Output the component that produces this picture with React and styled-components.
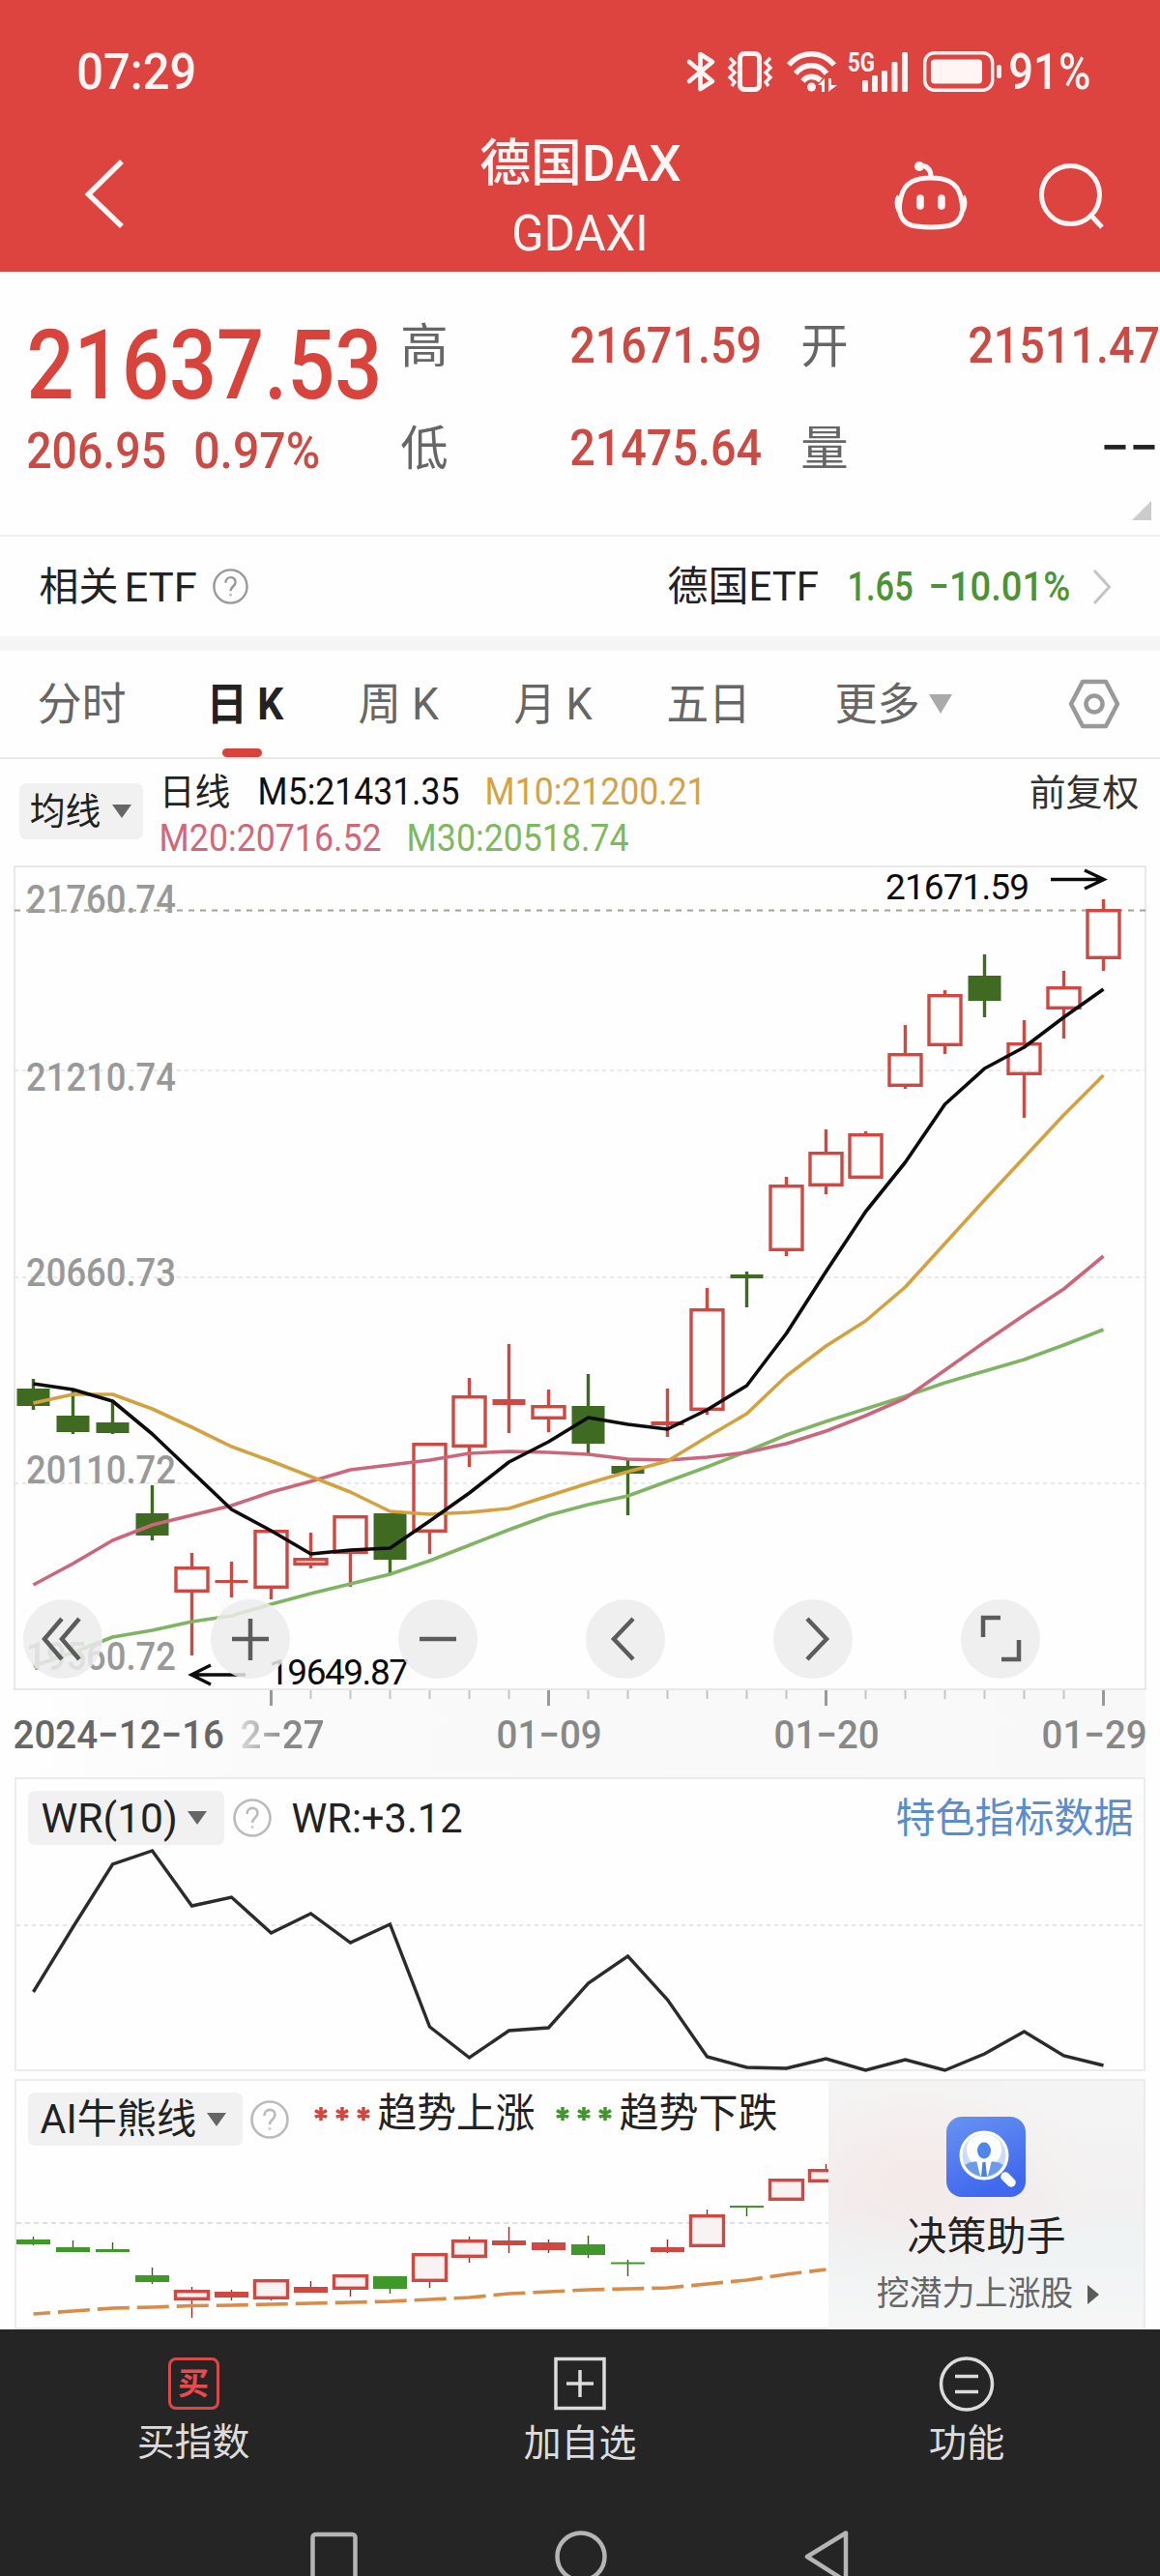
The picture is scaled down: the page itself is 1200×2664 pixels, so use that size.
import { useLayoutEffect, useRef, useState } from 'react';
import styled, { createGlobalStyle } from 'styled-components';

const GlobalStyle = createGlobalStyle`
  * {
    box-sizing: border-box;
    margin: 0;
    padding: 0;
  }

  body {
    width: 1200px;
    overflow-x: hidden;
    background: #fefefe;
    color: #222;
    font-family: Roboto, 'Noto Sans CJK SC', sans-serif;
  }

  svg {
    display: block;
    flex: none;
    overflow: visible;
  }
`;

const RED = '#cf4842';
const GREEN = '#3f6a22';
const AI_GREEN = '#40982b';

/* ---------- fitted text ---------- */

const TextBox = styled.div`
  flex: none;
  width: ${(p) => p.$width}px;
  margin-left: ${(p) => p.$before || 0}px;
  height: ${(p) => p.$line || p.$size}px;
  line-height: ${(p) => p.$line || p.$size}px;
  font-size: ${(p) => p.$size}px;
  font-weight: ${(p) => p.$weight || 400};
  color: ${(p) => p.$color || 'inherit'};
  white-space: nowrap;
`;

const TextRun = styled.span`
  display: inline-block;
  transform-origin: 0 50%;
`;

// Squeezes a run of text horizontally so that it fills exactly `width` pixels
function Fit({ children, width, size, line, weight, color, before }) {
  const ref = useRef(null);
  const [scale, setScale] = useState(1);

  useLayoutEffect(() => {
    setScale((width + size * 0.07) / ref.current.offsetWidth);
  }, [width, size, children]);

  return (
    <TextBox
      $width={width}
      $size={size}
      $line={line}
      $weight={weight}
      $color={color}
      $before={before}
    >
      <TextRun
        ref={ref}
        style={{ transform: `translateX(${-size * 0.035}px) scaleX(${scale})` }}
      >
        {children}
      </TextRun>
    </TextBox>
  );
}

/* ---------- header ---------- */

const Header = styled.header`
  height: 281px;
  background: #dd4440;
  color: #fff5f5;
`;

const StatusBar = styled.div`
  display: flex;
  align-items: center;
  justify-content: space-between;
  height: 130px;
  padding: 18px 73px 0 81px;
`;

const StatusIcons = styled.div`
  display: flex;
  align-items: center;
`;

const StatusIcon = styled.svg.attrs({ fill: 'none', stroke: 'currentColor' })`
  margin-right: ${(p) => p.$after}px;
`;

const NavBar = styled.div`
  display: grid;
  grid-template-columns: 1fr 205px 1fr;
  height: 151px;
  padding: 4px 58px 0;
`;

const NavTitle = styled.div`
  display: flex;
  flex-direction: column;
  align-items: center;
`;

const NavActions = styled.div`
  display: flex;
  justify-content: flex-end;
  gap: 74px;
  padding-top: 31px;
`;

const BackSlot = styled.div`
  padding: 31px 0 0 29px;
`;

function TopBar() {
  return (
    <Header>
      <StatusBar>
        <Fit width={120} size={51} weight={500}>07:29</Fit>
        <StatusIcons>
          <StatusIcon $after={14} width="28" height="42" strokeWidth="4.6" strokeLinejoin="round" strokeLinecap="round">
            <path d="M2 11 26 31 13.5 39V3L26 11 2 31" />
          </StatusIcon>
          <StatusIcon $after={15} width="46" height="42" strokeWidth="5">
            <rect x="12.5" y="2.5" width="20" height="37" rx="4.5" />
            <path strokeWidth="3.4" d="M2 7l5 5-5 5 5 5-5 5 5 5-3 4M44 7l-5 5 5 5-5 5 5 5-5 5 3 4" />
          </StatusIcon>
          <StatusIcon $after={11} width="52" height="42" strokeWidth="5.6">
            <path d="M2 14C15-1 36-1 49 14M9 23C18 12 33 12 41 23M16.500 31C21 25 29 25 35 30" />
            <circle cx="25.500" cy="37" r="4.500" fill="currentColor" stroke="none" />
            <path fill="currentColor" stroke="none" d="M32 35l7-7v14h-3v-7zM43 42V28h3v7h6z" />
          </StatusIcon>
          <StatusIcon $after={16} width="62" height="42">
            <g fill="currentColor" stroke="none">
              <text x="0" y="20.500" fontSize="27" fontWeight="700" textLength="28" lengthAdjust="spacingAndGlyphs">5G</text>
              <rect x="15" y="30" width="6" height="12" rx="1.500" />
              <rect x="25" y="25" width="6" height="17" rx="1.500" />
              <rect x="35" y="20" width="6" height="22" rx="1.500" />
              <rect x="45.500" y="11" width="6" height="31" rx="1.500" />
              <rect x="56" y="1" width="6" height="41" rx="1.500" />
            </g>
          </StatusIcon>
          <StatusIcon $after={9} width="81" height="42" strokeWidth="3.4">
            <rect x="1.700" y="1.700" width="70" height="38.500" rx="10" />
            <rect x="8" y="8.500" width="53" height="25" rx="4" fill="currentColor" stroke="none" />
            <rect x="76" y="14" width="5" height="14" rx="2.500" fill="currentColor" stroke="none" />
          </StatusIcon>
          <Fit width={82} size={51} weight={500}>91%</Fit>
        </StatusIcons>
      </StatusBar>
      <NavBar>
        <BackSlot>
          <svg width="42" height="72" fill="none" stroke="currentColor" strokeWidth="5.500">
            <path d="M39 2 4.500 36 39 69" />
          </svg>
        </BackSlot>
        <NavTitle>
          <Fit width={205} size={52} line={72} weight={500}>德国DAX</Fit>
          <Fit width={138} size={51} line={72}>GDAXI</Fit>
        </NavTitle>
        <NavActions>
          <svg width="76" height="72" viewBox="925 164 76 72" fill="none" stroke="currentColor" strokeWidth="5">
            <path d="M963 183c14 0 27 3 31 20 6 22-6 29-16 30q-15 2-30 0c-10-1-22-8-16-30 4-17 17-20 31-20zM963 182c0-8-4-12-12-12" />
            <circle cx="951" cy="171" r="5" fill="currentColor" stroke="none" />
            <path strokeWidth="5" d="M930 202q-4 6 0 15M996 202q4 6 0 15" />
            <path strokeWidth="7.500" strokeLinecap="round" d="M952 204v8M974 204v8" />
          </svg>
          <svg width="67" height="72" viewBox="1075 164 67 72" fill="none" stroke="currentColor" strokeWidth="5">
            <circle cx="1107.500" cy="200.500" r="30" />
            <path d="m1128 221 12 13" />
          </svg>
        </NavActions>
      </NavBar>
    </Header>
  );
}

/* ---------- quote ---------- */

const Quote = styled.section`
  position: relative;
  display: flex;
  height: 274px;
  padding: 23px 0 0 31px;
  border-bottom: 2px solid #efefef;
`;

const PriceColumn = styled.div`
  width: 385px;
  padding-top: 19px;
`;

const ChangeRow = styled.div`
  display: flex;
  margin-left: -2px;
`;

const StatGrid = styled.div`
  display: grid;
  grid-template-columns: 175px 239px 173px 195px;
  grid-auto-rows: 106px;
`;

const CornerMark = styled.i`
  position: absolute;
  right: 9px;
  bottom: 15px;
  border-style: solid;
  border-width: 0 0 20px 20px;
  border-color: transparent transparent #ccc transparent;
`;

const STATS = [
  ['高', '21671.59'],
  ['开', '21511.47'],
  ['低', '21475.64'],
  ['量', '−−'],
];

function QuoteBoard() {
  return (
    <Quote>
      <PriceColumn>
        <Fit width={361} size={101} line={110} weight={500} color="#d8433c">21637.53</Fit>
        <ChangeRow>
          <Fit width={141} size={52} line={68} color="#cb4a43" weight={500}>206.95</Fit>
          <Fit width={127} size={52} line={68} color="#cb4a43" weight={500} before={32}>0.97%</Fit>
        </ChangeRow>
      </PriceColumn>
      <StatGrid>
        {STATS.map(([label, value]) => [
          <Fit key={label} width={46} size={49} line={109} color="#666">{label}</Fit>,
          value === '−−' ? (
            <Fit key={value} width={56} size={50} line={106} color="#222" weight={500} before={137}>{value}</Fit>
          ) : (
            <Fit key={value} width={195} size={52} line={107} color="#cb4a43" weight={500}>{value}</Fit>
          ),
        ])}
      </StatGrid>
      <CornerMark />
    </Quote>
  );
}

/* ---------- related ETF ---------- */

const EtfRow = styled.section`
  display: flex;
  align-items: center;
  height: 118px;
  padding: 0 50px 0 42px;
  border-bottom: 15px solid #f5f5f5;
`;

const Spacer = styled.div`
  flex: 1;
`;

const MoreArrow = styled.svg`
  margin-left: 24px;
`;

const HelpIcon = styled.svg.attrs({ viewBox: '0 0 40 40', fill: 'none', stroke: 'currentColor' })`
  width: ${(p) => p.$size}px;
  height: ${(p) => p.$size}px;
  margin-left: ${(p) => p.$before}px;
  color: ${(p) => p.$color || '#bbb'};
`;

function Help({ size, before, color }) {
  return (
    <HelpIcon $size={size} $before={before} $color={color}>
      <circle cx="20" cy="20" r="18.500" strokeWidth="2.600" />
      <path strokeWidth="2.600" d="M14.500 16c0-8 11-8 11-1 0 5-5.500 5-5.500 10" />
      <circle cx="20" cy="29.500" r="1" />
    </HelpIcon>
  );
}

function RelatedEtf() {
  return (
    <EtfRow>
      <Fit width={79} size={41} line={60}>相关</Fit>
      <Fit width={72} size={43} line={60} before={9}>ETF</Fit>
      <Help size={37} before={18} color="#999" />
      <Spacer />
      <Fit width={154} size={42} line={60}>德国ETF</Fit>
      <Fit width={65} size={42} line={64} color="#4c9336" weight={500} before={32}>1.65</Fit>
      <Fit width={144} size={42} line={64} color="#4c9336" weight={500} before={19}>−10.01%</Fit>
      <MoreArrow width="20" height="38" fill="none" stroke="#c4c4c4" strokeWidth="3">
        <path d="m2 2 15.500 17L2 36" />
      </MoreArrow>
    </EtfRow>
  );
}

/* ---------- period tabs ---------- */

const Tabs = styled.nav`
  display: flex;
  height: 112px;
  padding-left: 40px;
  border-bottom: 2px solid #e8e8e8;
`;

const Tab = styled.div`
  display: flex;
  flex-direction: column;
  align-items: center;
  justify-content: space-between;
  width: ${(p) => p.$width}px;
  margin-left: ${(p) => p.$before}px;
  color: ${(p) => (p.$active ? '#222' : '#666')};
`;

const TabMark = styled.i`
  width: 41px;
  height: 10px;
  margin: -10px 7px 0 0;
  border-radius: 5px;
  background: #d8433c;
`;

const Caret = styled.i`
  flex: none;
  align-self: center;
  margin-left: ${(p) => p.$before}px;
  border-style: solid;
  border-width: ${(p) => p.$height}px ${(p) => p.$width / 2}px 0;
  border-color: ${(p) => p.$color || '#666'} transparent transparent;
`;

const SettingsSlot = styled.div`
  margin-left: 120px;
  padding-top: 29px;
`;

const TABS = [
  { label: '分时', width: 89, before: 0 },
  { label: '日 K', width: 77, before: 86, active: true },
  { label: '周 K', width: 80, before: 80 },
  { label: '月 K', width: 78, before: 81 },
  { label: '五日', width: 84, before: 80 },
  { label: '更多', width: 85, before: 90 },
];

function PeriodTabs() {
  return (
    <Tabs>
      {TABS.map((tab) => (
        <Tab key={tab.label} $width={tab.width} $before={tab.before} $active={tab.active}>
          <Fit width={tab.width} size={46} line={111} weight={tab.active ? 700 : 400}>{tab.label}</Fit>
          {tab.active && <TabMark />}
        </Tab>
      ))}
      <Caret $before={11} $width={25} $height={20} $color="#aaa" />
      <SettingsSlot>
        <svg width="54" height="52" fill="none" stroke="#999" strokeWidth="4.500" strokeLinejoin="round">
          <path d="M15 3h24l12 23-12 23H15L3 26z" />
          <circle cx="27" cy="26" r="8.500" />
        </svg>
      </SettingsSlot>
    </Tabs>
  );
}

/* ---------- moving averages legend ---------- */

const Legend = styled.div`
  display: flex;
  height: 110px;
  padding-left: 20px;
`;

const DropButton = styled.div`
  display: flex;
  flex: none;
  align-items: center;
  width: ${(p) => p.$width}px;
  height: ${(p) => p.$height}px;
  padding-left: ${(p) => p.$pad}px;
  border-radius: 7px;
  background: #f1f1f1;
`;

const LegendButton = styled.div`
  padding-top: 25px;
`;

const LegendLines = styled.div`
  flex: 1;
  margin-left: 18px;
  padding-top: 9px;
`;

const LegendLine = styled.div`
  display: flex;
  height: 48px;
`;

function MaLegend() {
  return (
    <Legend>
      <LegendButton>
        <DropButton $width={128} $height={58} $pad={12}>
          <Fit width={71} size={38} line={60}>均线</Fit>
          <Caret $before={13} $width={20} $height={14} />
        </DropButton>
      </LegendButton>
      <LegendLines>
        <LegendLine>
          <Fit width={71} size={38} line={50}>日线</Fit>
          <Fit width={206} size={39.5} line={50} before={31} color="#111">M5:21431.35</Fit>
          <Fit width={226} size={39.5} line={50} before={29} color="#d4a346">M10:21200.21</Fit>
          <Fit width={111} size={38} line={52} before={337} color="#333">前复权</Fit>
        </LegendLine>
        <LegendLine>
          <Fit width={227} size={39.5} line={50} color="#d0687a">M20:20716.52</Fit>
          <Fit width={227} size={39.5} line={50} before={29} color="#7fb95f">M30:20518.74</Fit>
        </LegendLine>
      </LegendLines>
    </Legend>
  );
}

/* ---------- candle chart ---------- */

const xAt = (i) => 34.5 + i * 41;

// [body top, body bottom, wick top, wick bottom, rising]
const CANDLES = [
  [1436, 1454, 1426, 1458, 0],
  [1464, 1481, 1437, 1483, 0],
  [1471, 1482, 1449, 1483, 0],
  [1565, 1588, 1536, 1593, 0],
  [1620, 1647, 1606, 1712, 1],
  [1634, 1637, 1615, 1652, 1],
  [1582, 1643, 1582, 1654, 1],
  [1611, 1619, 1585, 1622, 1],
  [1567, 1607, 1567, 1641, 1],
  [1565, 1613, 1565, 1627, 0],
  [1492, 1585, 1492, 1607, 1],
  [1443, 1497, 1425, 1517, 1],
  [1447, 1453, 1390, 1482, 1],
  [1453, 1468, 1437, 1481, 1],
  [1454, 1493, 1421, 1503, 0],
  [1516, 1524, 1509, 1567, 0],
  [1470, 1474, 1436, 1486, 1],
  [1353, 1459, 1332, 1463, 1],
  [1318, 1322, 1315, 1352, 0],
  [1225, 1294, 1217, 1299, 1],
  [1191, 1227, 1168, 1235, 1],
  [1172, 1219, 1170, 1219, 1],
  [1089, 1124, 1060, 1126, 1],
  [1028, 1082, 1024, 1090, 1],
  [1009, 1035, 987, 1052, 0],
  [1078, 1112, 1055, 1156, 1],
  [1020, 1044, 1004, 1074, 1],
  [940, 992, 930, 1004, 1],
];

const AVERAGES = [
  {
    color: '#7fb463',
    ys: [1723, 1709, 1693, 1686, 1677, 1671, 1659, 1648, 1638, 1628, 1614, 1598, 1582, 1567, 1556, 1547, 1532, 1517, 1501, 1484, 1470, 1457, 1444, 1430, 1418, 1406, 1391, 1375],
  },
  {
    color: '#cb677b',
    ys: [1639, 1617, 1593, 1577, 1567, 1557, 1543, 1532, 1520, 1515, 1510, 1503, 1501, 1502, 1504, 1509, 1510, 1507, 1502, 1493, 1480, 1464, 1446, 1417, 1388, 1360, 1333, 1299],
  },
  {
    color: '#d3a23f',
    ys: [1451, 1442, 1442, 1457, 1476, 1496, 1511, 1527, 1543, 1563, 1566, 1564, 1560, 1547, 1534, 1522, 1511, 1486, 1462, 1423, 1392, 1366, 1331, 1286, 1241, 1197, 1153, 1112],
  },
  {
    color: '#0c0c0c',
    ys: [1431, 1437, 1449, 1483, 1522, 1561, 1583, 1607, 1603, 1601, 1573, 1544, 1512, 1491, 1466, 1473, 1478, 1458, 1433, 1379, 1315, 1253, 1202, 1142, 1105, 1083, 1052, 1023],
  },
];

const PRICE_LABELS = [
  ['21760.74', 944],
  ['21210.74', 1128],
  ['20660.73', 1330],
  ['20110.72', 1534],
  ['19560.72', 1727],
];

const points = (ys) => ys.map((y, i) => `${xAt(i)},${y}`).join(' ');

const ChartArea = styled.section`
  position: relative;
  height: 852px;
`;

const Tools = styled.div`
  position: absolute;
  left: 24px;
  bottom: 11px;
  display: flex;
  gap: 112px;
`;

const ToolButton = styled.button`
  width: 82px;
  height: 82px;
  border: 0;
  border-radius: 50%;
  background: rgba(236, 236, 236, 0.84);
  color: #5c5c5c;
`;

const TOOL_PATHS = [
  'M40 20 22 41l18 21M58 20 40 41l18 21',
  'M41 20v43M22 41h38',
  'M22 41h38',
  'M49 20 29 41l20 21',
  'M35 20l20 21-20 21',
  'M23 39V19h18M60 42v20H42',
];

function Candle({ i, data }) {
  const [top, bottom, high, low, rising] = data;
  const x = xAt(i);
  const color = rising ? RED : GREEN;
  const hollow = rising && bottom - top > 7;

  return (
    <g>
      <path d={`M${x} ${high}V${top}M${x} ${bottom}V${low}`} stroke={color} strokeWidth="3.4" />
      {hollow ? (
        <rect
          x={x - 16.5}
          y={top + 1.7}
          width="33"
          height={bottom - top - 3.4}
          fill="none"
          stroke={color}
          strokeWidth="3.4"
        />
      ) : (
        <rect x={x - 17} y={top} width="34" height={bottom - top} fill={color} />
      )}
    </g>
  );
}

function CandleChart() {
  return (
    <ChartArea>
      <svg width="1200" height="852" viewBox="0 895 1200 852" fill="none">
        <rect x="15" y="896" width="1170" height="851" stroke="#e8e8e8" strokeWidth="2" />
        <path d="M15 1107H1185M15 1321H1185M15 1534H1185" stroke="#e2e2e2" strokeWidth="1.600" strokeDasharray="4 4" />
        <g fill="#999" fontSize="41" fontWeight="500">
          {PRICE_LABELS.map(([label, y]) => (
            <text key={label} x="27" y={y} textLength="155" lengthAdjust="spacingAndGlyphs">{label}</text>
          ))}
        </g>
        <path d="M15 941.500H1185" stroke="#a5a58a" strokeWidth="2" strokeDasharray="6 6" />
        {CANDLES.map((data, i) => (
          <Candle key={i} i={i} data={data} />
        ))}
        {AVERAGES.map((line) => (
          <polyline key={line.color} points={points(line.ys)} stroke={line.color} strokeWidth="3.6" strokeLinejoin="round" />
        ))}
        <g stroke="#0c0c0c" strokeWidth="3.400">
          <path d="M1087 909.500h54M1122 900l20 9.500-20 9.500" />
          <path d="M254 1732h-54M218 1722l-20 10 20 10" />
        </g>
        <g fill="#0c0c0c" fontSize="37">
          <text x="916" y="930" textLength="149" lengthAdjust="spacing">21671.59</text>
          <text x="278" y="1742" textLength="145" lengthAdjust="spacing">19649.87</text>
        </g>
      </svg>
      <Tools>
        {TOOL_PATHS.map((d) => (
          <ToolButton key={d}>
            <svg width="82" height="82" fill="none" stroke="currentColor" strokeWidth="4.500">
              <path d={d} />
            </svg>
          </ToolButton>
        ))}
      </Tools>
    </ChartArea>
  );
}

/* ---------- time axis ---------- */

const Axis = styled.div`
  height: 91px;
  margin: 0 15px;
  background: linear-gradient(90deg, #fefefe 0, #fafafa 20%, #f8f8f8 100%);
`;

const AxisDates = styled.div`
  display: flex;
  align-items: center;
  height: 60px;
`;

const FadingDate = styled.div`
  margin-left: -3px;
  -webkit-mask-image: linear-gradient(90deg, transparent 18px, rgba(0, 0, 0, 0.35) 24px, #000 66px);
  mask-image: linear-gradient(90deg, transparent 18px, rgba(0, 0, 0, 0.35) 24px, #000 66px);
`;

function TimeAxis() {
  const ticks = Array.from({ length: 22 }, (_, n) => n + 6);

  return (
    <Axis>
      <svg width="1170" height="17" viewBox="15 0 1170 17">
        {ticks.map((i) => {
          const major = (i - 6) % 7 === 0;
          return (
            <path
              key={i}
              d={`M${xAt(i)} 1V${major ? 17 : 10}`}
              stroke={major ? '#999' : '#c4c4c4'}
              strokeWidth={major ? 3 : 2}
            />
          );
        })}
      </svg>
      <AxisDates>
        <Fit width={216} size={41} color="#666" weight={500}>2024−12−16</Fit>
        <FadingDate>
          <Fit width={106} size={41} color="#888" weight={500}>12−27</Fit>
        </FadingDate>
        <Fit width={106} size={41} color="#888" weight={500} before={181}>01−09</Fit>
        <Fit width={106} size={41} color="#888" weight={500} before={181}>01−20</Fit>
        <Fit width={106} size={41} color="#888" weight={500} before={171}>01−29</Fit>
      </AxisDates>
    </Axis>
  );
}

/* ---------- indicator panels ---------- */

const Panel = styled.section`
  display: flex;
  flex-direction: column;
  width: 1170px;
  height: ${(p) => p.$height}px;
  margin: 0 15px ${(p) => p.$after || 0}px;
  border: 2px solid #ebebeb;
`;

const PanelHead = styled.div`
  display: flex;
  align-items: center;
  height: ${(p) => p.$height}px;
  margin-top: ${(p) => p.$top}px;
  padding: 0 12px;
`;

const WR = [2060, 1993, 1928, 1914, 1971, 1962, 1999, 1979, 2009, 1990, 2096, 2128, 2100, 2097, 2051, 2023, 2068, 2127, 2138, 2139, 2129, 2141, 2130, 2141, 2124, 2101, 2126, 2136];

function WrPanel() {
  return (
    <Panel $height={304} $after={8}>
      <PanelHead $top={12} $height={56}>
        <DropButton $width={203} $height={56} $pad={15}>
          <Fit width={138} size={42} line={59}>WR(10)</Fit>
          <Caret $before={12} $width={20} $height={14} />
        </DropButton>
        <Help size={40} before={9} />
        <Fit width={174} size={42} line={55} before={22}>WR:+3.12</Fit>
        <Spacer />
        <Fit width={243} size={42} line={59} color="#5b8ccb">特色指标数据</Fit>
      </PanelHead>
      <svg width="1166" height="232" viewBox="17 1908 1166 232" fill="none">
        <path d="M17 1991H1183" stroke="#ddd" strokeWidth="1.600" strokeDasharray="4 4" />
        <polyline points={points(WR)} stroke="#2b2b2b" strokeWidth="3.400" />
      </svg>
    </Panel>
  );
}

const AI_CANDLES = [
  [2316, 2321, 2313, 2322, 0],
  [2324, 2329, 2317, 2329, 0],
  [2326, 2329, 2319, 2329, 0],
  [2353, 2360, 2345, 2362, 0],
  [2368, 2379, 2365, 2397, 1],
  [2370, 2376, 2368, 2379, 1],
  [2357, 2378, 2357, 2379, 1],
  [2365, 2371, 2359, 2371, 1],
  [2352, 2368, 2352, 2375, 1],
  [2354, 2367, 2354, 2372, 0],
  [2330, 2360, 2330, 2366, 1],
  [2316, 2335, 2313, 2340, 1],
  [2317, 2322, 2303, 2330, 1],
  [2319, 2327, 2316, 2330, 1],
  [2321, 2332, 2312, 2335, 0],
  [2339.5, 2341.5, 2337, 2354, 0],
  [2324, 2329, 2316, 2330, 1],
  [2290, 2324, 2285, 2324, 1],
  [2281, 2283, 2281, 2292, 0],
  [2253, 2276, 2253, 2276, 1],
  [2243, 2257, 2238, 2257, 1],
];

const TREND = [2393, 2390, 2387, 2386, 2384.5, 2384, 2383, 2382, 2381, 2380, 2378, 2376, 2372, 2370, 2368, 2367, 2366, 2362, 2358, 2352, 2347];

const AiBody = styled.div`
  display: flex;
  flex: 1;
`;

const AiMain = styled.div`
  display: flex;
  flex-direction: column;
  width: 840px;
  overflow: hidden;
`;

const AiClip = styled.div`
  width: 840px;
  height: 190px;
  overflow: hidden;
`;

const TrendLegend = styled.div`
  display: flex;
  align-items: center;
  margin-bottom: 11px;
`;

const StarsIcon = styled.svg`
  margin-left: ${(p) => p.$before}px;
`;

const AssistCard = styled.aside`
  display: flex;
  flex: 1;
  flex-direction: column;
  align-items: center;
  padding-top: 37px;
  background: radial-gradient(ellipse at 28% 40%, rgba(246, 228, 228, 0.6), transparent 55%),
    linear-gradient(180deg, #f5f5f5 0, #f2f0f0 52%, #eff3f4 66%, #f6f6f6 100%);
`;

const AssistLink = styled.div`
  display: flex;
  align-items: center;
  margin-left: 4px;
`;

const Play = styled.i`
  margin-left: 16px;
  border-style: solid;
  border-width: 10px 0 10px 12px;
  border-color: transparent transparent transparent #5a5a5a;
`;

function Stars({ color, before }) {
  const cross = [10, 32, 54].map((x) => `M${x} 0v14M${x - 6} 3.5l12 7M${x - 6} 10.500l12-7`).join('');
  return (
    <StarsIcon $before={before} width="64" height="14">
      <path d={cross} stroke={color} strokeWidth="3.500" />
    </StarsIcon>
  );
}

function AiCandle({ i, data }) {
  const [top, bottom, high, low, rising] = data;
  const x = xAt(i);
  const color = rising ? RED : AI_GREEN;
  const tall = bottom - top > 9;

  return (
    <g>
      <path d={`M${x} ${high}V${low}`} stroke={rising ? '#8f3030' : '#33611f'} strokeWidth="1.4" />
      {rising && tall ? (
        <rect x={x - 17} y={top + 1.7} width="34" height={bottom - top - 3.4} fill="#f8f2f2" stroke={color} strokeWidth="3.4" />
      ) : (
        <rect x={x - 17.5} y={top} width="35" height={bottom - top} fill={color} />
      )}
    </g>
  );
}

function AssistIcon() {
  return (
    <svg width="82" height="83" viewBox="0 0 82 83">
      <defs>
        <linearGradient id="assist" x1="0" y1="0" x2="0.4" y2="1">
          <stop offset="0" stopColor="#6893f2" />
          <stop offset="1" stopColor="#3f68ee" />
        </linearGradient>
        <clipPath id="lens">
          <circle cx="39" cy="40" r="22" />
        </clipPath>
      </defs>
      <rect width="82" height="83" rx="16" fill="url(#assist)" />
      <circle cx="39" cy="40" r="24" fill="#cbdcf8" stroke="#fff" strokeWidth="3" />
      <g clipPath="url(#lens)">
        <circle cx="39" cy="34" r="18" fill="#fff" />
        <path d="M17 62V52q5-6 17-6h10q12 0 17 6v10z" fill="#6f9be6" />
        <path d="M31 45h16l-4 16h-8z" fill="#fff" />
        <path d="M37.500 47h3l1.500 15h-6z" fill="#4f7fdc" />
      </g>
      <ellipse cx="39" cy="35" rx="7" ry="8.500" fill="#4f86ea" />
      <path d="m61 62 6 6" stroke="#fff" strokeWidth="9.500" strokeLinecap="round" />
    </svg>
  );
}

function AiPanel() {
  return (
    <Panel $height={259}>
      <AiBody>
        <AiMain>
          <PanelHead $top={12} $height={55}>
            <DropButton $width={222} $height={55} $pad={14}>
              <Fit width={159} size={42} line={58}>AI牛熊线</Fit>
              <Caret $before={12} $width={20} $height={14} />
            </DropButton>
            <Help size={40} before={8} />
            <TrendLegend>
              <Stars color="#d8433c" before={23} />
              <Fit width={160} size={42} line={40} before={6}>趋势上涨</Fit>
              <Stars color={AI_GREEN} before={20} />
              <Fit width={161} size={42} line={40} before={6}>趋势下跌</Fit>
            </TrendLegend>
          </PanelHead>
          <AiClip>
            <svg width="840" height="190" viewBox="17 2219 840 190" fill="none">
              <path d="M17 2299H857" stroke="#d6d6d6" strokeWidth="1.600" strokeDasharray="5 4" />
              {AI_CANDLES.map((data, i) => (
                <AiCandle key={i} i={i} data={data} />
              ))}
              <polyline points={points(TREND)} stroke="#d98c48" strokeWidth="3.600" strokeDasharray="33 8" strokeDashoffset="15.500" />
            </svg>
          </AiClip>
        </AiMain>
        <AssistCard>
          <AssistIcon />
          <Fit width={161} size={41} line={83}>决策助手</Fit>
          <AssistLink>
            <Fit width={201} size={35} line={35} color="#666">挖潜力上涨股</Fit>
            <Play />
          </AssistLink>
        </AssistCard>
      </AiBody>
    </Panel>
  );
}

/* ---------- bottom bars ---------- */

const Footer = styled.footer`
  height: 255px;
  overflow: hidden;
  background: #252525;
  color: #dcdcdc;
`;

const Actions = styled.div`
  display: grid;
  grid-template-columns: repeat(3, 1fr);
  height: 205px;
`;

const Action = styled.div`
  display: flex;
  flex-direction: column;
  align-items: center;
  padding-top: 28px;
`;

const BuyBadge = styled.div`
  display: grid;
  place-items: center;
  width: 53px;
  height: 54px;
  margin: 1px 0;
  border: 3px solid #d84a48;
  border-radius: 8px;
  color: #e84a50;
  font-size: 32px;
  line-height: 32px;
  font-weight: 700;
`;

const SystemKeys = styled.div`
  display: flex;
  justify-content: center;
  gap: 204px;
  padding: 3px 2px 0 0;
`;

function BottomBar() {
  return (
    <Footer>
      <Actions>
        <Action>
          <BuyBadge>买</BuyBadge>
          <Fit width={114} size={39} line={67}>买指数</Fit>
        </Action>
        <Action>
          <svg width="54" height="56" fill="none" stroke="currentColor" strokeWidth="3.500">
            <path d="M2 2.500h50v51H2zM27 14v28M13 28h28" />
          </svg>
          <Fit width={114} size={39} line={69}>加自选</Fit>
        </Action>
        <Action>
          <svg width="56" height="57" fill="none" stroke="currentColor" strokeWidth="3.500">
            <circle cx="28" cy="28.500" r="26.500" />
            <path d="M16 20.500h24M16 36.500h24" />
          </svg>
          <Fit width={76} size={39} line={67}>功能</Fit>
        </Action>
      </Actions>
      <SystemKeys>
        <svg width="49" height="50" fill="none" stroke="#b5b5b5" strokeWidth="4.500">
          <rect x="2.500" y="4" width="44" height="50" rx="3" />
        </svg>
        <svg width="54" height="50" fill="none" stroke="#b5b5b5" strokeWidth="4.500">
          <circle cx="27" cy="27" r="24.500" />
        </svg>
        <svg width="46" height="50" fill="none" stroke="#b5b5b5" strokeWidth="4.500" strokeLinejoin="round">
          <path d="M43 2.500v50L3 27z" />
        </svg>
      </SystemKeys>
    </Footer>
  );
}

function App() {
  return (
    <>
      <GlobalStyle />
      <TopBar />
      <QuoteBoard />
      <RelatedEtf />
      <PeriodTabs />
      <MaLegend />
      <CandleChart />
      <TimeAxis />
      <WrPanel />
      <AiPanel />
      <BottomBar />
    </>
  );
}

export default App;
